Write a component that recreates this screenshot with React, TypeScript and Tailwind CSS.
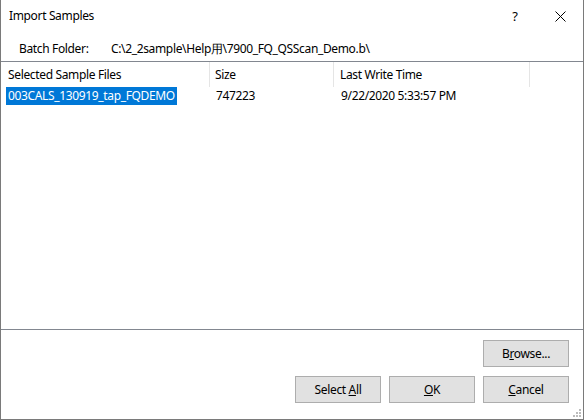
import React from "react";

const font = { fontFamily: '"Noto Sans", "Liberation Sans", sans-serif' };

type BtnProps = {
  children: React.ReactNode;
};

const DlgButton = ({ children }: BtnProps) => {
  return (
    <button className="w-[86px] h-[27px] bg-[#e1e1e1] border border-[#adadad] text-[12px] text-black flex items-center justify-center">
      <span>{children}</span>
    </button>
  );
};

export default function App() {
  return (
    <div
      className="w-[584px] h-[420px] bg-white border-x border-b border-[#7a7a7a] flex flex-col text-[12px] tracking-[-0.35px] text-black leading-none overflow-hidden"
      style={font}
    >
      {/* title bar */}
      <div className="h-[32px] flex items-center shrink-0">
        <span className="pl-[8px] flex-1">Import Samples</span>
        <div className="w-[46px] h-full flex items-center justify-center text-[13px]">?</div>
        <div className="w-[45px] h-full flex items-center justify-center">
          <svg width="11" height="11" viewBox="0 0 11 11">
            <path d="M0.5 0.5 L10.5 10.5 M10.5 0.5 L0.5 10.5" stroke="#000" strokeWidth="1" />
          </svg>
        </div>
      </div>

      {/* batch folder */}
      <div className="h-[29px] flex items-center shrink-0 pt-[4px]">
        <span className="pl-[18px] w-[110px]">Batch Folder:</span>
        <span>C:\2_2sample\Help用\7900_FQ_QSScan_Demo.b\</span>
      </div>

      {/* list view */}
      <div className="h-[269px] border-y border-[#828790] flex flex-col shrink-0">
        <div className="h-[25px] flex items-stretch shrink-0">
          <div className="w-[209px] pl-[7px] flex items-center border-r border-[#e5e5e5]">Selected Sample Files</div>
          <div className="w-[124px] pl-[5px] flex items-center border-r border-[#e5e5e5]">Size</div>
          <div className="w-[196px] pl-[6px] flex items-center border-r border-[#e5e5e5]">Last Write Time</div>
        </div>
        <div className="h-[18px] flex items-center">
          <div className="w-[209px] pl-[5px]">
            <span className="bg-[#0078d7] text-white h-[18px] w-[171px] inline-flex items-center pl-[2px] whitespace-nowrap overflow-hidden">003CALS_130919_tap_FQDEMO</span>
          </div>
          <div className="w-[124px] pl-[6px]">747223</div>
          <div className="pl-[7px]">9/22/2020 5:33:57 PM</div>
        </div>
      </div>

      {/* buttons */}
      <div className="flex-1 relative flex flex-col items-end pr-[14px] pt-[10px] gap-[9px]">
        <DlgButton>
          B<span className="underline">r</span>owse...
        </DlgButton>
        <div className="flex gap-[8px]">
          <DlgButton>
            Select <span className="underline">A</span>ll
          </DlgButton>
          <DlgButton>
            <span className="underline">O</span>K
          </DlgButton>
          <DlgButton>
            <span className="underline">C</span>ancel
          </DlgButton>
        </div>
        <svg className="absolute right-[1px] bottom-[1px]" width="10" height="10" viewBox="0 0 10 10">
          <rect x="7" y="1" width="2" height="2" fill="#bcbcbc" />
          <rect x="4" y="4" width="2" height="2" fill="#bcbcbc" />
          <rect x="7" y="4" width="2" height="2" fill="#bcbcbc" />
          <rect x="1" y="7" width="2" height="2" fill="#bcbcbc" />
          <rect x="4" y="7" width="2" height="2" fill="#bcbcbc" />
          <rect x="7" y="7" width="2" height="2" fill="#bcbcbc" />
        </svg>
      </div>
    </div>
  );
}
